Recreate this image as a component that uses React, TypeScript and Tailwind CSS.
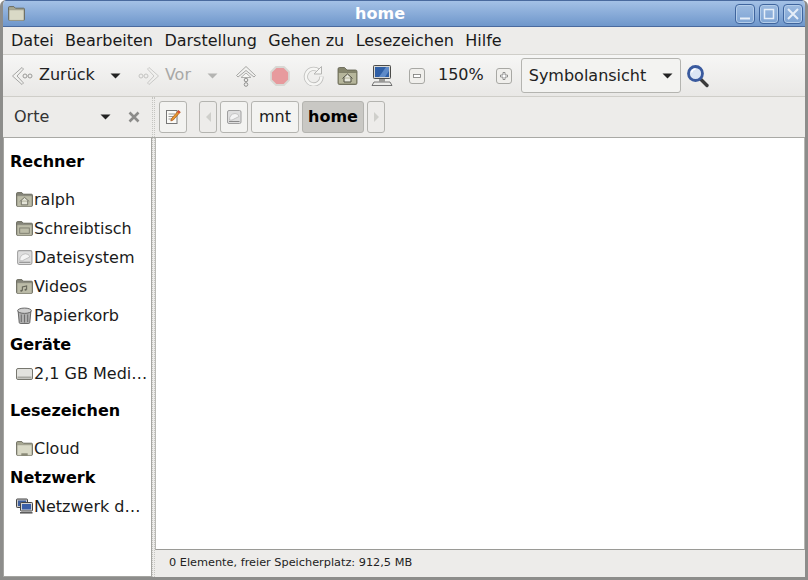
import type { ReactNode } from 'react';

function Caret({ className = '' }: { className?: string }) {
  return (
    <svg width="11" height="6" viewBox="0 0 11 6" className={className}>
      <path d="M0.5 0.5h10L5.5 5.5z" fill="currentColor" />
    </svg>
  );
}

function Folder({ children, light = false, size = 17 }: { children?: ReactNode; light?: boolean; size?: number }) {
  return (
    <svg width={size} height={size} viewBox="0 0 16 16">
      <path d="M.5 2.500q0-1 1-1h4l1.500 1.500h7.500q1 0 1 1v9.500q0 1-1 1h-13q-1 0-1-1z" fill={light ? '#a8a892' : '#85857a'} stroke="#5f5f52" strokeWidth="0.8" />
      <rect x="1" y="4.500" width="14" height="10" rx="0.600" fill={light ? '#d9d9c6' : '#bcbca8'} stroke="#88887a" strokeWidth="0.5" />
      {children}
    </svg>
  );
}

function HomeGlyph() {
  return <path d="M3.500 10l4.500-4 4.500 4M5 9v4h6V9" fill="#e4e4d8" stroke="#66665a" strokeWidth="0.8" />;
}

function DiskIcon({ size = 17 }: { size?: number }) {
  return (
    <svg width={size} height={size} viewBox="0 0 16 16">
      <rect x="1.500" y="1.500" width="13.500" height="13" rx="1.500" fill="#dedede" stroke="#a0a0a0" />
      <path d="M3.500 11q0-6 5.500-6.500 3.500 0 4 3L6 11z" fill="#f4f4f4" stroke="#b4b4b4" strokeWidth="0.7" />
      <path d="M3 12.500h10.500" stroke="#8a8a8a" />
    </svg>
  );
}

function TrashIcon() {
  return (
    <svg width="17" height="17" viewBox="0 0 16 16">
      <path d="M2 4l1 10.500q.2 1 1 1h8q.8 0 1-1l1-10.500z" fill="#b0b0b0" stroke="#555" strokeWidth="0.8" />
      <ellipse cx="8" cy="3.500" rx="6.500" ry="2.500" fill="#cfcfcf" stroke="#555" strokeWidth="0.8" />
      <path d="M5 7v7M8 7v7.500M11 7v7" stroke="#6e6e6e" strokeWidth="1" />
    </svg>
  );
}

function DriveIcon() {
  return (
    <svg width="17" height="16" viewBox="0 0 17 16">
      <rect x="0.500" y="2.500" width="16" height="11" rx="1.500" fill="#e2e2de" stroke="#77776f" />
      <rect x="1.500" y="10.500" width="14" height="2" fill="#a8a8a2" />
    </svg>
  );
}

function NetworkIcon() {
  return (
    <svg width="17" height="17" viewBox="0 0 17 17">
      <rect x="0.500" y="1" width="11" height="8.500" rx="0.800" fill="#c8c8c8" stroke="#444" />
      <rect x="2" y="2.500" width="8" height="5.500" fill="#3d5f9e" />
      <rect x="4.500" y="4.500" width="12" height="8.500" rx="0.800" fill="#d4d4d4" stroke="#444" />
      <rect x="6" y="6" width="9" height="5.500" fill="#3a5fa8" />
      <path d="M4 14.800h12.500" stroke="#555" strokeWidth="1.500" />
    </svg>
  );
}

function BackArrow({ flip = false, dim = false }: { flip?: boolean; dim?: boolean }) {
  return (
    <svg width="22" height="22" viewBox="0 0 22 22" className={flip ? '-scale-x-100' : ''} opacity={dim ? 0.5 : 1}>
      <path d="M11 2.500L1.500 11l9.500 8.500 1.500-1.500L6 11l6.500-7z" fill="#f2f2f0" stroke="#a5a5a3" strokeWidth="1" strokeLinejoin="round" />
      <circle cx="14" cy="11" r="2" fill="none" stroke="#9a9a98" />
      <circle cx="19" cy="11" r="2" fill="none" stroke="#9a9a98" />
    </svg>
  );
}

function UpArrow() {
  return (
    <svg width="22" height="22" viewBox="0 0 22 22">
      <path d="M11 1.500L1.500 10.500l1.500 1.500L11 5.500l8 6.500 1.500-1.500z" fill="#f2f2f0" stroke="#a5a5a3" strokeLinejoin="round" />
      <path d="M11 8l-5 4.500h10z" fill="#f6f6f4" stroke="#b0b0ae" strokeLinejoin="round" />
      <circle cx="11" cy="15" r="1.800" fill="none" stroke="#8f8f8d" />
      <circle cx="11" cy="19.500" r="1.800" fill="none" stroke="#8f8f8d" />
    </svg>
  );
}

function StopIcon() {
  return (
    <svg width="20" height="20" viewBox="0 0 20 20">
      <path d="M6 1h8l5 5v8l-5 5H6l-5-5V6z" fill="#e79a9d" stroke="#d8d8d4" strokeWidth="1.800" strokeLinejoin="round" />
    </svg>
  );
}

function ReloadIcon() {
  return (
    <svg width="21" height="21" viewBox="0 0 21 21">
      <path d="M15.500 5.500A7.800 7.800 0 1 0 18.500 11.500" fill="none" stroke="#bdbdbb" strokeWidth="4.200" />
      <path d="M15.500 5.500A7.800 7.800 0 1 0 18.500 11.500" fill="none" stroke="#f6f6f4" strokeWidth="2.600" />
      <path d="M18.500 1.500v7.500h-7.500z" fill="#f6f6f4" stroke="#b5b5b3" strokeLinejoin="round" />
    </svg>
  );
}

function HomeFolderIcon() {
  return (
    <svg width="21" height="20" viewBox="0 0 21 20">
      <path d="M1 3q0-1.500 1.500-1.500h5L10 4h8.500Q20 4 20 5.500V17q0 1.500-1.500 1.500h-16Q1 18.500 1 17z" fill="#85856c" stroke="#5e5e4c" strokeWidth="0.800" />
      <rect x="1.500" y="6.500" width="18" height="11.500" rx="1" fill="#b6b69b" stroke="#77775f" strokeWidth="0.700" />
      <path d="M5.500 12.500l5-4.500 5 4.500M7 11.500v4.500h7v-4.500" fill="#e8e8dc" stroke="#4e4e40" strokeWidth="1" />
    </svg>
  );
}

function ComputerIcon() {
  return (
    <svg width="22" height="22" viewBox="0 0 22 22">
      <rect x="2.500" y="0.500" width="17" height="13" rx="0.800" fill="#d8d8d4" stroke="#4c4c4a" />
      <rect x="4" y="2" width="14" height="10" fill="#2f5fa6" />
      <path d="M8 12l7-10h3v4l-4 6z" fill="#5f8bc8" />
      <rect x="8" y="14" width="6" height="2.500" fill="#9a9a97" />
      <path d="M1 20.500l2-3.500h16l2 3.500z" fill="#ececea" stroke="#555" strokeWidth="0.800" />
    </svg>
  );
}

function ZoomButton({ plus = false }: { plus?: boolean }) {
  return (
    <span className="flex h-[16px] w-[16px] items-center justify-center rounded-[3px] border border-[#a8a8a4] bg-[#f0efec]">
      <svg width="8" height="8" viewBox="0 0 8 8">
        {plus ? (
          <path d="M3 .5h2v2.500h2.500v2H5v2.500H3V5H.5V3H3z" fill="#fff" stroke="#7a7a78" strokeWidth="0.800" />
        ) : (
          <rect x="0.500" y="2.500" width="7" height="3" fill="#fff" stroke="#7a7a78" strokeWidth="0.800" />
        )}
      </svg>
    </span>
  );
}

function SearchIcon() {
  return (
    <svg width="24" height="24" viewBox="0 0 24 24">
      <path d="M14.500 15l6.500 6.500" stroke="#3b3b3b" strokeWidth="3.400" strokeLinecap="round" />
      <circle cx="9.500" cy="9.500" r="7" fill="#dbe5f4" stroke="#3a5a9e" strokeWidth="2.800" />
      <path d="M5.500 8.500a4.500 4.500 0 0 1 4-3.500" stroke="#fff" strokeWidth="1.300" fill="none" />
    </svg>
  );
}

function EditIcon() {
  return (
    <svg width="16" height="16" viewBox="0 0 16 16">
      <rect x="1.500" y="1.500" width="10.500" height="13" fill="#fbfbf8" stroke="#777" />
      <path d="M3.500 5h6.500M3.500 7.500h5M3.500 10h4" stroke="#999" />
      <path d="M13.500 1.500l1.800 1.500-7 8-2.500 1 .8-2.500z" fill="#e8992e" stroke="#a5521a" strokeWidth="0.700" />
      <path d="M13.500 1.500l1.800 1.500-1.200 1.400-1.800-1.500z" fill="#d94a3a" />
    </svg>
  );
}

function TitleButton({ children }: { children: ReactNode }) {
  return (
    <span className="flex h-[20px] w-[20px] items-center justify-center rounded-[4px] border border-[#3f659e] bg-gradient-to-b from-[#9cbae0] to-[#7ea4d4] shadow-[inset_0_0_0_1px_#b4cdea]">
      <svg width="14" height="14" viewBox="0 0 14 14" fill="none" stroke="#e6eef8">
        {children}
      </svg>
    </span>
  );
}

function PathButton({ children, className = '' }: { children: ReactNode; className?: string }) {
  return (
    <span className={`flex h-[32px] items-center justify-center rounded-[3px] border border-[#b4b4b0] ${className}`}>
      {children}
    </span>
  );
}

function SideHead({ children }: { children: ReactNode }) {
  return <div className="flex h-[29px] items-center pl-[6px] font-bold text-[#000]">{children}</div>;
}

function SideRow({ icon, children }: { icon: ReactNode; children: ReactNode }) {
  return (
    <div className="flex h-[29px] items-center pl-[12px] text-[#1a1a1a]">
      <span className="flex w-[18px] shrink-0 items-center">{icon}</span>
      <span className="truncate">{children}</span>
    </div>
  );
}

const menus = ['Datei', 'Bearbeiten', 'Darstellung', 'Gehen zu', 'Lesezeichen', 'Hilfe'];

export default function App() {
  return (
    <div className="flex h-[580px] w-[808px] flex-col overflow-hidden rounded-t-[6px] border-x-[3px] border-b-[3px] border-x-[#8d8d8b] border-b-[#8d8d8b] bg-[#edecea] font-['DejaVu_Sans',sans-serif] text-[16px] text-[#1a1a1a]">
      {/* title bar */}
      <div className="-mx-[3px] relative flex h-[27px] shrink-0 items-center justify-between border-y border-y-[#4a6a9e] bg-gradient-to-b from-[#a4c1e6] to-[#6f97cb] pl-[8px] pr-[5px]">
        <Folder light />
        <span className="absolute left-[355px] text-[16px] font-bold tracking-[0.1px] text-white">home</span>
        <div className="flex gap-[4px]">
          <TitleButton><path d="M2 11.500h10" strokeWidth="2" /></TitleButton>
          <TitleButton><rect x="2.500" y="2.500" width="9" height="9" strokeWidth="1.500" /></TitleButton>
          <TitleButton><path d="M2 2l10 10M12 2L2 12" strokeWidth="2" /></TitleButton>
        </div>
      </div>

      {/* menu */}
      <div className="flex h-[28px] shrink-0 items-center gap-[11.4px] border-b border-b-[#cfcec9] pl-[8px]">
        {menus.map((m) => (
          <span key={m}>{m}</span>
        ))}
      </div>

      {/* toolbar */}
      <div className="flex h-[42px] shrink-0 items-center border-b border-b-[#cfcec9] bg-gradient-to-b from-[#f6f6f5] to-[#e9e8e6] pl-[8px] text-[#222]">
        <BackArrow />
        <span className="-mt-[2px] ml-[6px]">Zurück</span>
        <Caret className="ml-[15px] text-[#222]" />
        <span className="ml-[17px]"><BackArrow flip dim /></span>
        <span className="-mt-[2px] ml-[5px] text-[#a8a8a6]">Vor</span>
        <Caret className="ml-[16px] text-[#b4b4b2]" />
        <span className="ml-[17px]"><UpArrow /></span>
        <span className="ml-[13px]"><StopIcon /></span>
        <span className="ml-[13px]"><ReloadIcon /></span>
        <span className="ml-[13px]"><HomeFolderIcon /></span>
        <span className="ml-[13px]"><ComputerIcon /></span>
        <span className="ml-[16px]"><ZoomButton /></span>
        <span className="-mt-[2px] ml-[13px]">150%</span>
        <span className="ml-[12px]"><ZoomButton plus /></span>
        <div className="ml-[9px] flex h-[35px] w-[160px] items-center justify-between rounded-[3px] border border-[#b4b4b0] bg-[#f3f3f1] pl-[7px] pr-[7px]">
          <span>Symbolansicht</span>
          <Caret />
        </div>
        <span className="ml-[5px]"><SearchIcon /></span>
      </div>

      {/* location row */}
      <div className="flex h-[41px] shrink-0 items-center border-b border-b-[#a9a9a5]">
        <div className="flex w-[149px] items-center pl-[11px]">
          <span className="text-[#333]">Orte</span>
          <Caret className="ml-[51px] text-[#222]" />
          <svg width="12" height="12" viewBox="0 0 12 12" className="ml-[17px]">
            <path d="M1.500 1.500l9 9M10.500 1.500l-9 9" stroke="#8c8c8a" strokeWidth="2.600" />
          </svg>
        </div>
        <div className="h-full w-[3px] border-x border-dotted border-x-[#c4c4c0]" />
        <PathButton className="ml-[4px] w-[28px] bg-[#f3f3f1]"><EditIcon /></PathButton>
        <PathButton className="ml-[12px] w-[18px]">
          <svg width="5" height="10" viewBox="0 0 5 10"><path d="M5 0v10L0 5z" fill="#cfcfcb" /></svg>
        </PathButton>
        <PathButton className="ml-[3px] w-[28px] bg-[#f3f3f1]"><DiskIcon size={16} /></PathButton>
        <PathButton className="ml-[3px] w-[48px] bg-[#f3f3f1]">mnt</PathButton>
        <PathButton className="ml-[3px] w-[62px] border-[#a5a5a0] bg-[#c9c8c4] font-bold text-[#000]">home</PathButton>
        <PathButton className="ml-[3px] w-[18px]">
          <svg width="5" height="10" viewBox="0 0 5 10"><path d="M0 0v10l5-5z" fill="#cfcfcb" /></svg>
        </PathButton>
      </div>

      {/* main */}
      <div className="flex min-h-0 flex-1">
        <div className="w-[149px] shrink-0 overflow-hidden border border-t-0 border-[#a5a5a1] bg-white pt-[9px]">
          <SideHead>Rechner</SideHead>
          <div className="h-[9px]" />
          <SideRow icon={<Folder><HomeGlyph /></Folder>}>ralph</SideRow>
          <SideRow icon={<Folder><rect x="3.500" y="7.500" width="9" height="5" fill="none" stroke="#77776a" strokeWidth="0.800" /></Folder>}>Schreibtisch</SideRow>
          <SideRow icon={<DiskIcon />}>Dateisystem</SideRow>
          <SideRow icon={<Folder><path d="M6 12V8.500l4-1V11" fill="none" stroke="#66665a" /><circle cx="5" cy="12" r="1" fill="#66665a" /><circle cx="9" cy="11" r="1" fill="#66665a" /></Folder>}>Videos</SideRow>
          <SideRow icon={<TrashIcon />}>Papierkorb</SideRow>
          <SideHead>Geräte</SideHead>
          <SideRow icon={<DriveIcon />}>2,1 GB Medi…</SideRow>
          <div className="h-[8px]" />
          <SideHead>Lesezeichen</SideHead>
          <div className="h-[9px]" />
          <SideRow icon={<Folder light><rect x="5" y="12.500" width="6" height="2.500" fill="#8a8a78" /></Folder>}>Cloud</SideRow>
          <SideHead>Netzwerk</SideHead>
          <SideRow icon={<NetworkIcon />}>Netzwerk d…</SideRow>
        </div>
        <div className="h-full w-[3px] shrink-0 border-x border-dotted border-x-[#c4c4c0]" />
        <div className="flex min-w-0 flex-1 flex-col">
          <div className="flex-1 border-x border-b border-x-[#b8b8b4] border-b-[#9a9a96] bg-white" />
          <div className="flex h-[27px] shrink-0 items-center pl-[14px] text-[11.3px] text-[#222]">
            0 Elemente, freier Speicherplatz: 912,5 MB
          </div>
        </div>
      </div>
    </div>
  );
}
